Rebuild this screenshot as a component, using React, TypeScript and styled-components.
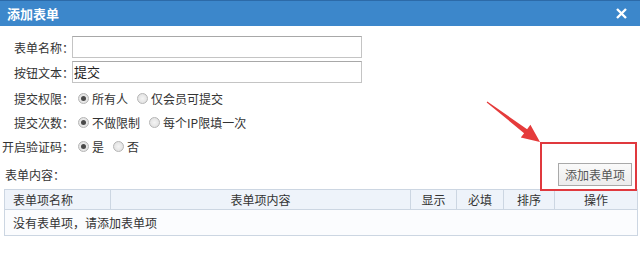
import React from "react";
import styled, { createGlobalStyle } from "styled-components";

const GlobalStyle = createGlobalStyle`
  html, body {
    margin: 0;
    padding: 0;
    background: #fff;
  }
  body {
    font-family: "Noto Sans CJK SC", "Noto Sans", sans-serif;
    font-size: 12px;
    color: #333;
  }
`;

const Dialog = styled.div`
  position: relative;
  width: 640px;
  height: 264px;
  overflow: hidden;
  background: #fff;
`;

const TitleBar = styled.div`
  height: 25px;
  border-top: 1px solid #2c6aa8;
  background: #3c87cb;
  display: flex;
  align-items: center;
  justify-content: space-between;
  padding: 0 13px 0 7px;
  color: #fff;
`;

const Title = styled.span`
  font-size: 13px;
  font-weight: 700;
`;

const Form = styled.div`
  display: flex;
  flex-direction: column;
  padding-top: 10px;
`;

const Row = styled.div<{ $h: number; $mt?: number }>`
  display: flex;
  align-items: center;
  height: ${(p) => p.$h}px;
  margin-top: ${(p) => p.$mt ?? 0}px;
`;

const Label = styled.span<{ $w?: number }>`
  width: ${(p) => p.$w ?? 74}px;
  text-align: right;
  white-space: nowrap;
  color: #333;
`;

const TextInput = styled.div`
  box-sizing: border-box;
  margin-left: -2px;
  width: 290px;
  height: 22px;
  border: 1px solid #c4c4c4;
  border-top-color: #a8a8a8;
  font-size: 13px;
  line-height: 20px;
  padding-left: 1px;
  color: #222;
`;

const Options = styled.div`
  display: flex;
  align-items: center;
  gap: 9px;
  margin-left: 4px;
`;

const Option = styled.label`
  display: flex;
  align-items: center;
  gap: 3px;
  color: #333;
`;

const Radio = styled.span<{ $on?: boolean }>`
  box-sizing: border-box;
  width: 11px;
  height: 11px;
  border-radius: 50%;
  border: 1px solid #b5b5b5;
  background: radial-gradient(circle, #f4f4f4 0%, #dcdcdc 100%);
  display: flex;
  align-items: center;
  justify-content: center;
  &::after {
    content: "";
    display: ${(p) => (p.$on ? "block" : "none")};
    width: 5px;
    height: 5px;
    border-radius: 50%;
    background: #4a4a4a;
  }
`;

const ContentRow = styled.div`
  display: flex;
  align-items: center;
  justify-content: space-between;
  height: 23px;
  margin-top: 5px;
  padding: 0 8px 0 5px;
`;

const AddButton = styled.button`
  box-sizing: border-box;
  height: 23px;
  width: 74px;
  padding: 0;
  border: 1px solid #a9a9a9;
  background: linear-gradient(#fafafa, #ececec);
  font-family: inherit;
  font-size: 12px;
  color: #555;
`;

const Table = styled.table`
  margin: 3px 0 0 4px;
  width: 633px;
  border-collapse: collapse;
  table-layout: fixed;
  font-size: 12px;
  color: #333;
  th,
  td {
    border: 1px solid #ccd6e2;
    padding: 0;
    font-weight: 400;
  }
  th {
    height: 19px;
    background: #eef3fa;
    text-align: center;
  }
  th:first-child {
    text-align: left;
    padding-left: 8px;
  }
  td {
    height: 25px;
    padding-left: 8px;
    background: #fbfcfe;
  }
`;

const Overlay = styled.svg`
  position: absolute;
  left: 0;
  top: 0;
  pointer-events: none;
`;

const MarkBox = styled.div`
  position: absolute;
  left: 540px;
  top: 142px;
  width: 97px;
  height: 49px;
  box-sizing: border-box;
  border: 2px solid #e0393e;
  pointer-events: none;
`;

const columns: [string, number][] = [
  ["表单项名称", 106],
  ["表单项内容", 300],
  ["显示", 46],
  ["必填", 47],
  ["排序", 51],
  ["操作", 83],
];

export default function App() {
  return (
    <Dialog>
      <GlobalStyle />
      <TitleBar>
        <Title>添加表单</Title>
        <svg width="11" height="11" viewBox="0 0 11 11">
          <path d="M1 1 L10 10 M10 1 L1 10" stroke="#fff" strokeWidth="2.4" />
        </svg>
      </TitleBar>
      <Form>
        <Row $h={22}>
          <Label>表单名称：</Label>
          <TextInput />
        </Row>
        <Row $h={22} $mt={3}>
          <Label>按钮文本：</Label>
          <TextInput>提交</TextInput>
        </Row>
        <Row $h={24} $mt={3}>
          <Label>提交权限：</Label>
          <Options>
            <Option>
              <Radio $on />
              所有人
            </Option>
            <Option>
              <Radio />
              仅会员可提交
            </Option>
          </Options>
        </Row>
        <Row $h={24}>
          <Label>提交次数：</Label>
          <Options>
            <Option>
              <Radio $on />
              不做限制
            </Option>
            <Option>
              <Radio />
              每个IP限填一次
            </Option>
          </Options>
        </Row>
        <Row $h={24}>
          <Label>开启验证码：</Label>
          <Options>
            <Option>
              <Radio $on />
              是
            </Option>
            <Option>
              <Radio />
              否
            </Option>
          </Options>
        </Row>
        <ContentRow>
          <span>表单内容：</span>
          <AddButton>添加表单项</AddButton>
        </ContentRow>
        <Table>
          <colgroup>
            {columns.map(([, w], i) => (
              <col key={i} style={{ width: w }} />
            ))}
          </colgroup>
          <thead>
            <tr>
              {columns.map(([name], i) => (
                <th key={i}>{name}</th>
              ))}
            </tr>
          </thead>
          <tbody>
            <tr>
              <td colSpan={6}>没有表单项，请添加表单项</td>
            </tr>
          </tbody>
        </Table>
      </Form>
      <Overlay width="640" height="264">
        <polygon
          points="487.3,101.6 527.1,129.2 530.4,124.8 540,142 520.8,137.6 524.1,133.2 486.7,102.4"
          fill="#e53b3b"
        />
      </Overlay>
      <MarkBox />
    </Dialog>
  );
}
